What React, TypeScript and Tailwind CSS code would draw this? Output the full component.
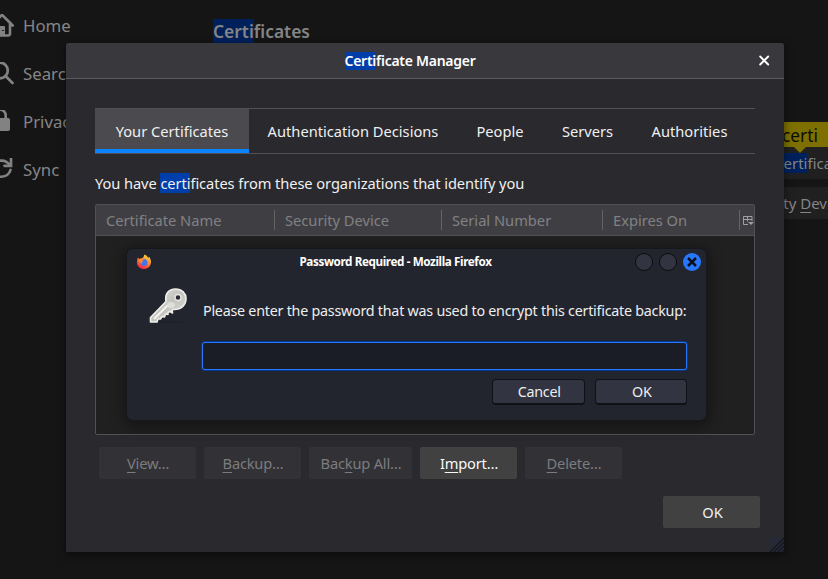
import type { ReactNode } from "react";

function Key({ children }: { children: ReactNode }) {
  return <span className="underline decoration-1 underline-offset-[3px] [text-decoration-skip-ink:none]">{children}</span>;
}

const sideItems = [
  {
    label: "Home",
    icon: (
      <svg width="24" height="24" viewBox="0 0 24 24" fill="none" stroke="#828283" strokeWidth="2.6" strokeLinecap="round" strokeLinejoin="round">
        <path d="M1.300 11.500 12 .8 22.700 11.500M4 10v9.500a2 2 0 0 0 2 2h12a2 2 0 0 0 2-2V8.500" />
        <path d="M10 21v-8h4v8z" fill="#828283" strokeWidth="2" />
        <path d="M12.500 16.500h1" stroke="#1a1a1b" strokeWidth="1.200" />
      </svg>
    ),
  },
  {
    label: "Search",
    icon: (
      <svg width="24" height="24" viewBox="0 0 24 24" fill="none" stroke="#828283" strokeWidth="2.7" strokeLinecap="round">
        <circle cx="10" cy="8.500" r="7.800" />
        <path d="m15.500 14 7 7" />
      </svg>
    ),
  },
  {
    label: "Privacy",
    icon: (
      <svg width="24" height="24" viewBox="0 0 24 24" fill="none">
        <path d="M4.500 10V5.300a5.500 5.500 0 0 1 11.200 0V10" stroke="#828283" strokeWidth="2.7" />
        <rect x="0" y="8" width="20" height="13" rx="2" fill="#828283" />
      </svg>
    ),
  },
  {
    label: "Sync",
    icon: (
      <svg width="24" height="24" viewBox="0 0 24 24" fill="none" stroke="#828283" strokeWidth="2.7" strokeLinecap="round">
        <path d="M20 7.500A10 9 0 0 0 1.500 9M1.500 13A10 9 0 0 0 20.500 12" />
        <path d="M21 .8v7h-6.500" />
      </svg>
    ),
  },
];

function BackgroundPage() {
  return (
    <div className="flex h-full text-[16.8px] text-[#858586]">
      <nav className="flex w-[213px] flex-col pt-0.5">
        {sideItems.map((s) => (
          <div key={s.label} className="flex h-12 items-center gap-[9px]">
            <span className="-ml-[10px] flex">{s.icon}</span>
            <span>{s.label}</span>
          </div>
        ))}
      </nav>
      <main className="flex flex-1 flex-col">
        <h2 className="mt-[19px] h-6 text-[17.4px] leading-[25px] font-semibold">
          <span className="inline-block h-6 bg-[#00205c] leading-[25px]">Certi</span>ficates
        </h2>
        <div className="mt-[104px] -mr-20 ml-[527px] flex flex-col gap-2 text-[15px]">
          <div className="relative flex h-8 items-center bg-[#202021] pl-[3px] whitespace-nowrap">
            <span className="flex h-5 items-center pl-[31px]">
              <span className="h-5 bg-[#00205c] leading-5"><Key>C</Key>erti</span>ficates…
            </span>
            <span className="absolute -top-[25px] left-[42px] h-[25px] w-[60px] bg-[#7d7000] text-[17.3px] leading-[27px] text-[#0c0c0c]">certi</span>
            <svg className="absolute top-0 left-[54px]" width="12" height="6"><path d="M0 0h12L6 6z" fill="#7d7000" /></svg>
          </div>
          <div className="flex h-8 items-center bg-[#202021] whitespace-nowrap">
            <span>Securi</span><span>ty <Key>D</Key>evices…</span>
          </div>
        </div>
      </main>
    </div>
  );
}

const tabs = [
  ["Your Certificates", "w-[154px] bg-[#4a4a4f] border-b-4 border-[#0a84ff] pt-1"],
  ["Authentication Decisions", "w-[208px]"],
  ["People", "w-[86px]"],
  ["Servers", "w-[89px]"],
  ["Authorities", "w-[115px]"],
];

const columns = [
  ["Certificate Name", "w-[179px]"],
  ["Security Device", "w-[167px]"],
  ["Serial Number", "w-[161px]"],
  ["Expires On", "w-[137px]"],
];

const actions = [
  { pre: "", k: "V", post: "iew…", cls: "w-[97px] bg-[#323236] text-[#7c7c7e]" },
  { pre: "", k: "B", post: "ackup…", cls: "w-[97px] bg-[#323236] text-[#7c7c7e]" },
  { pre: "Bac", k: "k", post: "up All…", cls: "w-[103px] bg-[#323236] text-[#7c7c7e]" },
  { pre: "I", k: "m", post: "port…", cls: "w-[97px] bg-[#414142] text-[#f9f9fa]" },
  { pre: "", k: "D", post: "elete…", cls: "w-[97px] bg-[#323236] text-[#7c7c7e]" },
];

function CertificateManager() {
  return (
    <section className="absolute top-[43px] left-[66px] flex h-[509px] w-[718px] flex-col rounded-t-[3px] bg-[#2a2a2e] text-[14.67px] text-[#f0f0f1] shadow-[0_2px_8px_rgba(0,0,0,0.5)]">
      <header className="flex h-9 items-center rounded-t-[3px] border-b border-[#5b5b5f] bg-[#38383d] pr-[14px]">
        <h1 className="mr-[5px] flex-1 text-center text-[14px] leading-[18px] font-semibold tracking-[-0.27px] text-white">
          <span className="inline-block h-[18px] bg-[#003eaa]">Certi</span>ficate Manager
        </h1>
        <svg width="11" height="11" viewBox="0 0 11 11" stroke="#fff" strokeWidth="1.900" strokeLinecap="round"><path d="m1.200 1.500 8 8m0-8-8 8" /></svg>
      </header>
      <div className="mt-[29px] ml-[29px] flex h-[46px] w-[660px] border-y border-[#515155]">
        {tabs.map(([label, cls]) => (
          <div key={label} className={`flex items-center justify-center whitespace-nowrap ${cls}`}>{label}</div>
        ))}
      </div>
      <p className="mt-[19px] ml-[29px] h-5 leading-5 tracking-[-0.08px] whitespace-nowrap">
        You have <span className="inline-block h-5 bg-[#003eaa]">certi</span>ficates from these organizations that identify you
      </p>
      <div className="mt-[11px] ml-[29px] flex h-[231px] w-[660px] flex-col rounded-[2px] border border-[#515155] bg-[#202021]">
        <div className="flex h-[31px] items-center border-b border-[#515155] bg-[#3f3f43] text-[#818184]">
          {columns.map(([label, cls]) => (
            <div key={label} className={`flex h-5 items-center border-r border-[#646468] pl-[10px] whitespace-nowrap ${cls}`}>{label}</div>
          ))}
          <svg className="ml-[3px]" width="11" height="11" viewBox="0 0 11 11" fill="none" stroke="#a0a0a2"><path d="M5 9.500H.5v-8h8.500V6M0 4.500h9M4.500 1v5.500" /><path d="M5 7h6L8 10z" fill="#a0a0a2" stroke="none" /></svg>
        </div>
      </div>
      <div className="mt-3 ml-[33px] flex gap-2">
        {actions.map((a) => (
          <button key={a.k} className={`h-8 rounded-[2px] pl-px tracking-[-0.2px] whitespace-nowrap ${a.cls}`}>{a.pre}<Key>{a.k}</Key>{a.post}</button>
        ))}
      </div>
      <button className="mt-[17px] mr-6 h-8 w-[97px] self-end rounded-[2px] bg-[#414142] pl-[2px]">OK</button>
      <svg className="absolute right-0 bottom-0" width="15" height="15" viewBox="0 0 15 15">
        <path d="M0 0h15v15H0z" fill="#262936" />
        <path d="M1 15 15 1M5 15 15 5M9 15l6-6M13 15l2-2" stroke="#141720" strokeWidth="1.400" />
      </svg>
    </section>
  );
}

function FirefoxIcon() {
  return (
    <svg width="16" height="16" viewBox="0 0 16 16">
      <defs>
        <linearGradient id="fx" x1="0.8" y1="0" x2="0.3" y2="1"><stop offset="0" stopColor="#ffe34a" /><stop offset=".45" stopColor="#ff8a2a" /><stop offset="1" stopColor="#f0204e" /></linearGradient>
      </defs>
      <path d="M2 3.500 3.200 5 6 4.500 7.500 3 8.500.5C11 1.500 11.500 3 12.300 4L13 2.500c3 4 2.300 8-.2 10.700C8 17 1 14.500 1 8.500c0-2 .3-3.500 1-5Z" fill="url(#fx)" />
      <circle cx="8" cy="8.500" r="3.500" fill="#4675e8" />
      <path d="M3 5c2-1 3.500-.5 4.700.8L6.300 7.500c-.6.7-.7 1.500 0 2.300-2-.2-3.300-2.300-3.300-4.800Z" fill="#ff8b30" />
    </svg>
  );
}

function KeyIcon() {
  return (
    <svg width="42" height="40" viewBox="0 0 42 40">
      <defs>
        <linearGradient id="metal" x1="0" y1="0" x2="1" y2="1"><stop offset="0" stopColor="#e4e4e0" /><stop offset=".5" stopColor="#c2c3be" /><stop offset="1" stopColor="#e4e4df" /></linearGradient>
      </defs>
      <ellipse cx="23" cy="36" rx="13" ry="1" fill="#1f212a" />
      <path d="M18 15.500c-1.500-8 3-12.500 9.500-12.500 6.500 0 10.500 4.500 10.500 9.500 0 6.500-4.500 11-12 11l-2 .5.5 3-2.500-1.500-2 1v2l-2.500-.5-1 3-2.500-.5-1.500 2.500H10l-1 3H2.500v-4.500Z" fill="url(#metal)" stroke="#efefeb" strokeWidth="1.600" strokeLinejoin="round" />
      <path d="M6 33 20 19" stroke="#f5f5f0" strokeWidth="2" />
      <ellipse cx="23" cy="19" rx="4" ry="3" fill="#dedfd9" />
      <circle cx="30" cy="11.500" r="3" fill="#292b34" stroke="#e6e6e1" strokeWidth="1.500" />
    </svg>
  );
}

function PasswordDialog() {
  return (
    <section className="absolute top-[249px] left-[127px] flex h-[171px] w-[579px] flex-col rounded-[6px] bg-[#23252e] text-[14.67px] text-[#eeeeef] shadow-[0_0_0_1px_#17181d,0_3px_14px_3px_rgba(0,0,0,0.4)]">
      <header className="flex h-[26px] items-center pr-[5px] pl-[9px]">
        <FirefoxIcon />
        <h2 className="flex-1 pl-[4px] text-center text-[11.7px] font-bold tracking-[-0.39px] text-white">Password Required - Mozilla Firefox</h2>
        <div className="flex gap-[6px]">
          <span className="size-[18px] rounded-full border border-[#0b0c10] bg-[#323541]" />
          <span className="size-[18px] rounded-full border border-[#0b0c10] bg-[#323541]" />
          <span className="flex size-[18px] items-center justify-center rounded-full bg-[#2777ff]">
            <svg width="10" height="10" viewBox="0 0 10 10" stroke="#0c111d" strokeWidth="2.500"><path d="m1 1 8 8m0-8-8 8" /></svg>
          </span>
        </div>
      </header>
      <div className="flex">
        <div className="w-[75px] pt-[11px] pl-[21px]"><KeyIcon /></div>
        <div className="w-[485px]">
          <p className="mt-[26px] h-5 pl-px text-[14.3px] leading-5 tracking-[-0.24px] whitespace-nowrap">Please enter the password that was used to encrypt this certificate backup:</p>
          <input className="mt-[21px] block h-[28px] w-full rounded-[3px] border border-[#2777ff] bg-[#1a1d25] shadow-[0_0_0_1px_#07388f] outline-none" type="password" />
          <div className="mt-[9px] flex justify-end gap-[10px]">
            {["Cancel", "OK"].map((b) => (
              <button key={b} className="h-[26px] w-[92.5px] rounded-[4px] border border-b-2 border-[#0f1116] bg-[#323541] pl-[2px] text-[14.3px] tracking-[-0.24px]">{b}</button>
            ))}
          </div>
        </div>
      </div>
    </section>
  );
}

export default function App() {
  return (
    <div className="relative h-[579px] w-[828px] overflow-hidden bg-[#151516] font-['Noto_Sans',sans-serif]">
      <BackgroundPage />
      <CertificateManager />
      <PasswordDialog />
    </div>
  );
}
